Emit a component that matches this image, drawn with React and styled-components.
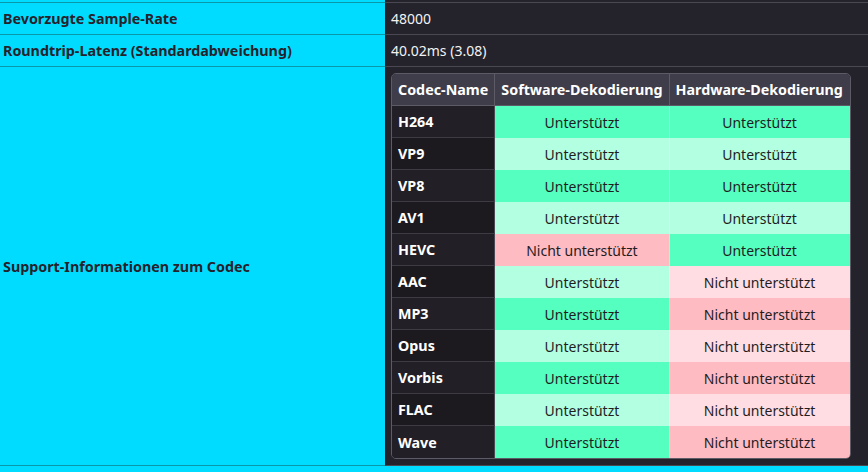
import styled, { createGlobalStyle } from "styled-components";

const GlobalStyle = createGlobalStyle`
  * { box-sizing: border-box; }
  body {
    margin: 0;
    background: #00dcff;
    font-family: "Noto Sans", "Open Sans", sans-serif;
    font-size: 14px;
  }
`;

const codecs = [
  { name: "H264", sw: true, hw: true },
  { name: "VP9", sw: true, hw: true },
  { name: "VP8", sw: true, hw: true },
  { name: "AV1", sw: true, hw: true },
  { name: "HEVC", sw: false, hw: true },
  { name: "AAC", sw: true, hw: false },
  { name: "MP3", sw: true, hw: false },
  { name: "Opus", sw: true, hw: false },
  { name: "Vorbis", sw: true, hw: false },
  { name: "FLAC", sw: true, hw: false },
  { name: "Wave", sw: true, hw: false },
];

const colors = {
  yes: ["#55ffbf", "#b3ffe1"],
  no: ["#ffbbc2", "#ffdde3"],
};

export default function App() {
  return (
    <>
      <GlobalStyle />
      <InfoTable>
        <tbody>
          <tr>
            <Label $stub />
            <Value $stub />
          </tr>
          <tr>
            <Label>Bevorzugte Sample-Rate</Label>
            <Value>48000</Value>
          </tr>
          <tr>
            <Label>Roundtrip-Latenz (Standardabweichung)</Label>
            <Value>40.02ms (3.08)</Value>
          </tr>
          <tr>
            <Label>Support-Informationen zum Codec</Label>
            <Value $nested>
              <CodecBox>
                <CodecTable>
                  <thead>
                    <tr>
                      <Head $w={103}>Codec-Name</Head>
                      <Head $w={173}>Software-Dekodierung</Head>
                      <Head $w={180} $last>
                        Hardware-Dekodierung
                      </Head>
                    </tr>
                  </thead>
                  <tbody>
                    {codecs.map((c, i) => (
                      <tr key={c.name}>
                        <NameCell $alt={i % 2 === 1} $last={i === codecs.length - 1}>
                          {c.name}
                        </NameCell>
                        <StatusCell $bg={colors[c.sw ? "yes" : "no"][i % 2]}>
                          {c.sw ? "Unterstützt" : "Nicht unterstützt"}
                        </StatusCell>
                        <StatusCell $bg={colors[c.hw ? "yes" : "no"][i % 2]} $last>
                          {c.hw ? "Unterstützt" : "Nicht unterstützt"}
                        </StatusCell>
                      </tr>
                    ))}
                  </tbody>
                </CodecTable>
              </CodecBox>
            </Value>
          </tr>
        </tbody>
      </InfoTable>
    </>
  );
}

const InfoTable = styled.table`
  width: 100%;
  border-collapse: separate;
  border-spacing: 0;
`;

const Label = styled.th`
  width: 386px;
  height: ${(p) => (p.$stub ? "3px" : "32px")};
  padding: 0 3px;
  background: #00dcff;
  color: #25222c;
  font-size: 14.3px;
  font-weight: 700;
  text-align: left;
  vertical-align: middle;
  border-right: 1px solid #19171d;
  border-bottom: 1px solid #0a97aa;
`;

const Value = styled.td`
  height: ${(p) => (p.$stub ? "3px" : "32px")};
  padding: ${(p) => (p.$nested ? "6px 5px" : "0 5px")};
  background: #24222b;
  color: #f2f2f2;
  vertical-align: middle;
  border-bottom: 1px solid #4a4852;
`;

const CodecBox = styled.div`
  display: block;
  width: fit-content;
  border: 1px solid #5d5b66;
  border-radius: 5px;
  overflow: hidden;
`;

const CodecTable = styled.table`
  display: table;
  border-collapse: separate;
  border-spacing: 0;
`;

const Head = styled.th`
  width: ${(p) => p.$w}px;
  height: 32px;
  padding: 0 6px;
  background: #3f3d49;
  color: #ffffff;
  font-size: 14.3px;
  font-weight: 700;
  text-align: left;
  white-space: nowrap;
  border-bottom: 1px solid #5d5b66;
  border-right: ${(p) => (p.$last ? "none" : "1px solid #5d5b66")};
`;

const NameCell = styled.td`
  height: 32px;
  padding: 0 6px;
  background: ${(p) => (p.$alt ? "#1c1a1f" : "#221f27")};
  color: #ffffff;
  font-size: 14.3px;
  font-weight: 700;
  border-right: 1px solid #4a4852;
  border-bottom: ${(p) => (p.$last ? "none" : "1px solid #3d3b43")};
`;

const StatusCell = styled.td`
  height: 32px;
  padding: 0 6px;
  background: ${(p) => p.$bg};
  color: #1f1d24;
  text-align: center;
  white-space: nowrap;
  border-right: ${(p) => (p.$last ? "none" : "1px solid rgba(255,255,255,0.3)")};
`;
